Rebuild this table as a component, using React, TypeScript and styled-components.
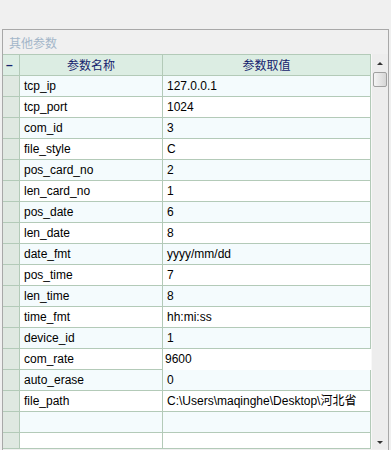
import React from "react";
import styled, { createGlobalStyle } from "styled-components";

const GlobalStyle = createGlobalStyle`
    html, body {
        margin: 0;
        padding: 0;
        background: #f0f0f0;
        overflow: hidden;
    }
    body {
        font-family: "Liberation Sans", Arial, "Noto Sans CJK SC", sans-serif;
        font-size: 12px;
    }
`;

const LINE = "#b3cab8";

const Page = styled.div`
    width: 391px;
    height: 450px;
    padding: 29px 0 0 2px;
    box-sizing: border-box;
    background: #f0f0f0;
`;

const Panel = styled.div`
    width: 387px;
    height: 421px;
    box-sizing: border-box;
    border: 1px solid #a8a8a8;
    border-bottom: none;
    display: flex;
    flex-direction: column;
`;

const Title = styled.div`
    height: 24px;
    line-height: 26px;
    padding-left: 6px;
    color: #a3b6c9;
    font-family: "Noto Sans CJK SC", sans-serif;
    font-size: 12px;
`;

const Body = styled.div`
    display: flex;
    flex: 1;
    min-height: 0;
`;

const Grid = styled.div`
    width: 368px;
    display: flex;
    flex-direction: column;
    height: 395px;
    box-sizing: border-box;
    border-top: 1px solid ${LINE};
    border-bottom: 1px solid ${LINE};
    overflow: hidden;
`;

const Row = styled.div`
    display: grid;
    grid-template-columns: 17px 143px 208px;
    flex: none;
`;

const Cell = styled.div<{ $bg: string; $edit?: boolean }>`
    height: 20px;
    line-height: 20px;
    padding-left: ${(p) => (p.$edit ? "2px" : "4px")};
    background: ${(p) => p.$bg};
    border-right: 1px solid ${(p) => (p.$edit ? p.$bg : LINE)};
    border-bottom: 1px solid ${(p) => (p.$edit ? p.$bg : LINE)};
    color: #000;
    white-space: nowrap;
    overflow: hidden;
`;

const HeadCell = styled.div<{ $narrow?: boolean }>`
    height: 20px;
    line-height: 20px;
    background: #dcede3;
    border-right: 1px solid ${LINE};
    border-bottom: 1px solid ${LINE};
    color: #16246e;
    text-align: ${(p) => (p.$narrow ? "left" : "center")};
    padding-left: ${(p) => (p.$narrow ? "3px" : "0")};
    font-family: ${(p) => (p.$narrow ? '"Liberation Sans", sans-serif' : '"Noto Sans CJK SC", sans-serif')};
    font-size: 12px;
    font-weight: ${(p) => (p.$narrow ? "bold" : "normal")};
`;

const Marker = styled.div`
    background: #dfe8e1;
    border-right: 1px solid ${LINE};
    border-bottom: 1px solid ${LINE};
    height: 20px;
`;

const Scrollbar = styled.div`
    width: 17px;
    height: 395px;
    background: #ededed;
    border-left: 1px solid #f8f8f8;
    box-sizing: border-box;
    display: flex;
    flex-direction: column;
    align-items: center;
`;

const Arrow = styled.div<{ $down?: boolean }>`
    width: 0;
    height: 0;
    border-left: 3px solid transparent;
    border-right: 3px solid transparent;
    ${(p) => (p.$down ? "border-top: 3px solid #333;" : "border-bottom: 3px solid #333;")}
    margin-top: ${(p) => (p.$down ? "auto" : "8px")};
    margin-bottom: ${(p) => (p.$down ? "5px" : "0")};
`;

const Thumb = styled.div`
    width: 14px;
    height: 15px;
    margin-top: 7px;
    box-sizing: border-box;
    border: 1px solid #a0a0a0;
    border-radius: 2px;
    background: linear-gradient(to right, #f4f4f4, #d6d6d6);
`;

const rows: [string, string][] = [
    ["tcp_ip", "127.0.0.1"],
    ["tcp_port", "1024"],
    ["com_id", "3"],
    ["file_style", "C"],
    ["pos_card_no", "2"],
    ["len_card_no", "1"],
    ["pos_date", "6"],
    ["len_date", "8"],
    ["date_fmt", "yyyy/mm/dd"],
    ["pos_time", "7"],
    ["len_time", "8"],
    ["time_fmt", "hh:mi:ss"],
    ["device_id", "1"],
    ["com_rate", "9600"],
    ["auto_erase", "0"],
    ["file_path", "C:\\Users\\maqinghe\\Desktop\\河北省"],
    ["", ""],
    ["", ""],
];

const App = () => (
    <>
        <GlobalStyle />
        <Page>
            <Panel>
                <Title>其他参数</Title>
                <Body>
                    <Grid>
                        <Row>
                            <HeadCell $narrow>–</HeadCell>
                            <HeadCell>参数名称</HeadCell>
                            <HeadCell>参数取值</HeadCell>
                        </Row>
                        {rows.map(([name, value], i) => {
                            const bg = i % 2 === 0 ? "#f4fbfd" : "#ffffff";
                            const editing = name === "com_rate";
                            return (
                                <Row key={i}>
                                    <Marker />
                                    <Cell $bg={bg}>{name}</Cell>
                                    <Cell $bg={editing ? "#ffffff" : bg} $edit={editing}>{value}</Cell>
                                </Row>
                            );
                        })}
                    </Grid>
                    <Scrollbar>
                        <Arrow />
                        <Thumb />
                        <Arrow $down />
                    </Scrollbar>
                </Body>
            </Panel>
        </Page>
    </>
);

export default App;
